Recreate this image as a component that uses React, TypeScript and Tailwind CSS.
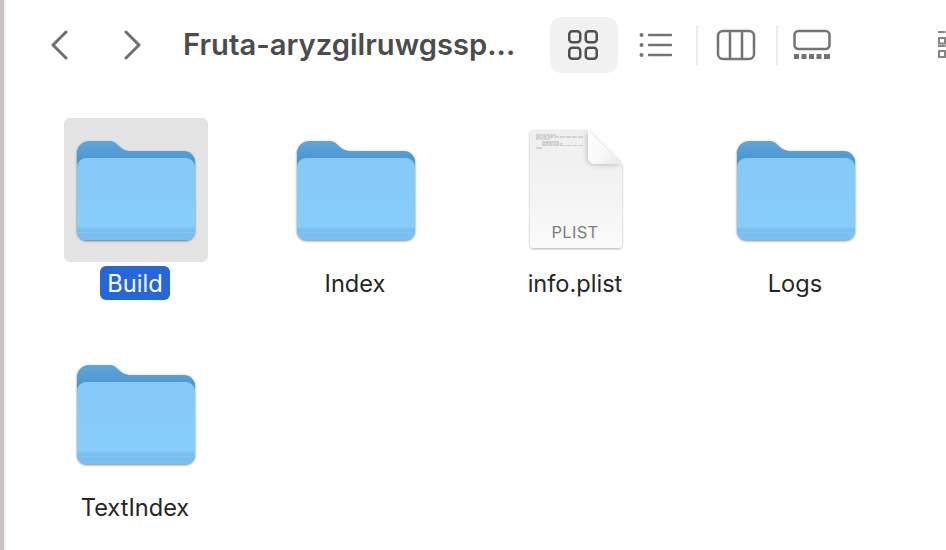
import React from "react";

function Folder({ id }: { id: string }) {
  return (
    <svg width="126" height="108" viewBox="-4 -2 126 108" className="block">
      <defs>
        <linearGradient id={id + "b"} x1="0" y1="0" x2="0" y2="1">
          <stop offset="0" stopColor="#5fa6d9" />
          <stop offset="0.3" stopColor="#408ed0" />
          <stop offset="1" stopColor="#408ed0" />
        </linearGradient>
        <linearGradient id={id + "f"} x1="0" y1="0" x2="0" y2="1">
          <stop offset="0" stopColor="#85caf7" />
          <stop offset="1" stopColor="#88cefa" />
        </linearGradient>
        <filter id={id + "s"} x="-5%" y="-5%" width="110%" height="115%">
          <feDropShadow dx="0" dy="1" stdDeviation="1" floodColor="#000000" floodOpacity="0.5" />
        </filter>
      </defs>
      <g filter={`url(#${id}s)`}>
        <path
          d="M0 12 A12 12 0 0 1 12 0 H33 C41 0 42 10 54 10 H107 A11 11 0 0 1 118 21 V90 A9 9 0 0 1 109 99 H9 A9 9 0 0 1 0 90 Z"
          fill={`url(#${id}b)`}
        />
      </g>
      <path
        d="M9 17 H109 A9 9 0 0 1 118 26 V90 A9 9 0 0 1 109 99 H9 A9 9 0 0 1 0 90 V26 A9 9 0 0 1 9 17 Z"
        fill={`url(#${id}f)`}
      />
      <path d="M0 86 H118 V90 A9 9 0 0 1 109 99 H9 A9 9 0 0 1 0 90 Z" fill="#79c0f0" />
      <rect x="0" y="86" width="118" height="1.5" fill="#84c6f4" />
      <rect x="0" y="91" width="118" height="1" fill="#82c5f4" />
    </svg>
  );
}

function Plist() {
  return (
    <svg width="100" height="126" viewBox="0 0 100 126" className="block">
      <defs>
        <linearGradient id="pg" x1="0" y1="0" x2="0" y2="1">
          <stop offset="0" stopColor="#efefef" />
          <stop offset="0.6" stopColor="#f4f4f4" />
          <stop offset="1" stopColor="#fbfbfb" />
        </linearGradient>
        <linearGradient id="pf" x1="0" y1="0" x2="1" y2="1">
          <stop offset="0" stopColor="#ffffff" />
          <stop offset="0.6" stopColor="#f8f8f8" />
          <stop offset="1" stopColor="#e6e6e6" />
        </linearGradient>
        <filter id="ps" x="-10%" y="-10%" width="120%" height="120%">
          <feDropShadow dx="0" dy="1" stdDeviation="1" floodColor="#000000" floodOpacity="0.32" />
        </filter>
        <filter id="pfs" x="-30%" y="-30%" width="160%" height="160%">
          <feDropShadow dx="-1" dy="1" stdDeviation="2.5" floodColor="#000000" floodOpacity="0.22" />
        </filter>
      </defs>
      <path
        d="M8 3 H62 L96 37 V117 A4 4 0 0 1 92 121 H8 A4 4 0 0 1 4 117 V7 A4 4 0 0 1 8 3 Z"
        fill="url(#pg)"
        filter="url(#ps)"
      />
      <g stroke="#8e8e8e" strokeWidth="0.6" fill="none">
        <path d="M10 8 H30" strokeDasharray="3 0.6" />
        <path d="M10 10 H57" strokeDasharray="5 1" />
        <path d="M10 12 H24" strokeDasharray="3 0.6" />
        <path d="M16 15 H33" />
        <path d="M16 17 H36" strokeDasharray="3 0.6" />
        <path d="M16 18.5 H58" strokeDasharray="5 1" stroke="#b5b5b5" />
        <path d="M10 21 H16" />
      </g>
      <path
        d="M62 3 L96 37 H69 A7 7 0 0 1 62 30 Z"
        fill="url(#pf)"
        filter="url(#pfs)"
      />
      <text
        x="49"
        y="111"
        textAnchor="middle"
        fontFamily="Inter, sans-serif"
        fontSize="16.5"
        letterSpacing="0.3"
        fill="#7d7d7d"
      >
        PLIST
      </text>
    </svg>
  );
}

function Item({
  name,
  id,
  selected,
  file,
}: {
  name: string;
  id: string;
  selected?: boolean;
  file?: boolean;
}) {
  return (
    <div className="w-[220px] h-[224px] flex flex-col items-center">
      <div
        className={
          "w-[144px] h-[144px] rounded-[6px] flex justify-center " +
          (selected ? "bg-[#e4e4e4]" : "") +
          (file ? " pt-[9px]" : " pt-[21px]")
        }
      >
        {file ? <Plist /> : <Folder id={id} />}
      </div>
      <div
        className={
          "mt-[4px] mr-[2px] h-[34px] leading-[36px] px-[7px] rounded-[6px] text-[23.6px] " +
          (selected ? "bg-[#2566d9] text-white" : "text-[#262626]")
        }
      >
        {name}
      </div>
    </div>
  );
}

function Sep() {
  return <div className="w-[2px] h-[40px] bg-[#ececec]" />;
}

export default function App() {
  return (
    <div className="w-[946px] h-[550px] overflow-hidden bg-white flex font-['Inter',sans-serif]">
      <div className="w-[4px] h-full bg-[#c9c0c3] shrink-0" />
      <div className="w-[2px] h-full bg-[#f1eff0] shrink-0" />
      <div className="w-[940px] shrink-0 overflow-hidden">
        <div className="h-[92px] flex items-center">
          <svg width="18" height="30" viewBox="0 0 18 30" className="ml-[44px] mb-[2px] shrink-0" fill="none" stroke="#6f6f6f" strokeWidth="3" strokeLinecap="round" strokeLinejoin="round">
            <path d="M16 2 L3 15 L16 28" />
          </svg>
          <svg width="18" height="30" viewBox="0 0 18 30" className="ml-[56px] mb-[2px] shrink-0" fill="none" stroke="#6f6f6f" strokeWidth="3" strokeLinecap="round" strokeLinejoin="round">
            <path d="M2 2 L15 15 L2 28" />
          </svg>
          <div className="ml-[41px] w-[338px] shrink-0 text-[29.2px] font-semibold text-[#4c4c4c] whitespace-nowrap leading-none mb-[2px]">
            Fruta-aryzgilruwgssp...
          </div>
          <div className="ml-[29px] w-[68px] h-[56px] shrink-0 rounded-[12px] bg-[#f1f1f1] flex items-center justify-center mb-[2px]">
            <svg width="30" height="30" viewBox="0 0 30 30" fill="none" stroke="#505050" strokeWidth="2.5" className="mr-[3px]">
              <rect x="1.25" y="1.25" width="11" height="11" rx="3" />
              <rect x="17.75" y="1.25" width="11" height="11" rx="3" />
              <rect x="1.25" y="17.75" width="11" height="11" rx="3" />
              <rect x="17.75" y="17.75" width="11" height="11" rx="3" />
            </svg>
          </div>
          <svg width="34" height="26" viewBox="0 0 34 26" className="ml-[21px] mb-[2px] shrink-0" fill="none" stroke="#737373" strokeWidth="2.4" strokeLinecap="round">
            <circle cx="2.5" cy="3" r="2" fill="#737373" stroke="none" />
            <circle cx="2.5" cy="13" r="2" fill="#737373" stroke="none" />
            <circle cx="2.5" cy="23" r="2" fill="#737373" stroke="none" />
            <path d="M10 3 H32 M10 13 H32 M10 23 H32" />
          </svg>
          <div className="ml-[23px] mb-[2px] shrink-0"><Sep /></div>
          <svg width="40" height="32" viewBox="0 0 40 32" className="ml-[18px] mb-[2px] shrink-0" fill="none" stroke="#737373" strokeWidth="2.5">
            <rect x="2" y="2" width="36" height="28" rx="5" />
            <path d="M14 2 V30 M26 2 V30" />
          </svg>
          <div className="ml-[20px] mb-[2px] shrink-0"><Sep /></div>
          <svg width="38" height="32" viewBox="0 0 38 32" className="ml-[15px] mb-[2px] shrink-0" fill="none" stroke="#737373" strokeWidth="2.5">
            <rect x="1.5" y="2" width="35" height="18" rx="4" />
            <g fill="#737373" stroke="none">
              <rect x="1" y="25" width="5" height="5" />
              <rect x="8.5" y="25" width="5" height="5" />
              <rect x="16" y="25" width="5" height="5" />
              <rect x="23.5" y="25" width="5" height="5" />
              <rect x="31" y="25" width="6" height="5" />
            </g>
          </svg>
          <svg width="8" height="30" viewBox="0 0 8 30" className="ml-[107px] shrink-0 mb-[2px]" fill="none" stroke="#858585" strokeWidth="2">
            <path d="M0 2 H7.5" />
            <rect x="1" y="8" width="6" height="5.5" />
            <path d="M0 16 H7.5" />
            <rect x="1" y="21" width="6" height="6" />
          </svg>
        </div>
        <div className="pl-[20px] pt-[26px] grid grid-cols-[repeat(4,220px)]">
          <Item id="a" name="Build" selected />
          <Item id="b" name="Index" />
          <Item id="c" name="info.plist" file />
          <Item id="d" name="Logs" />
          <Item id="e" name="TextIndex" />
        </div>
      </div>
    </div>
  );
}
